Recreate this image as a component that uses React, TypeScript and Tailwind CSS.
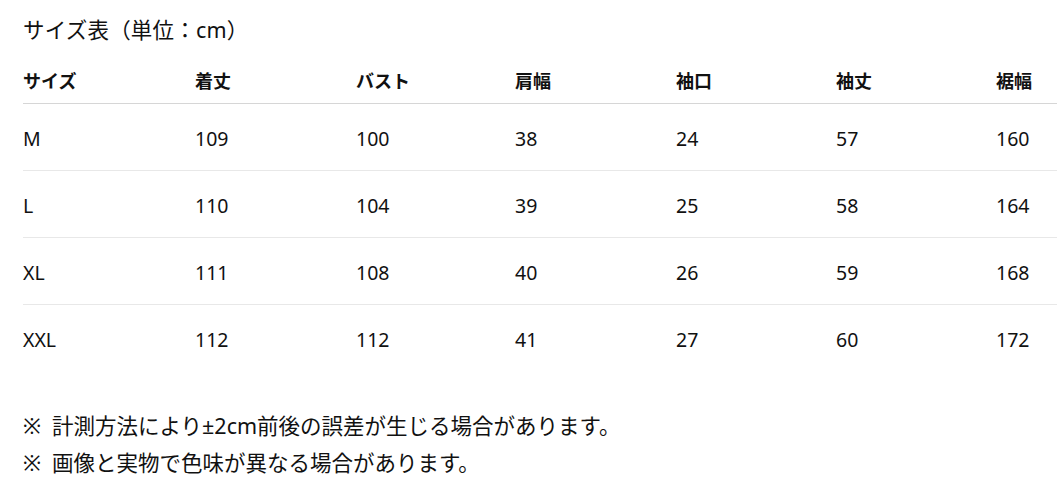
const font = { fontFamily: '"Noto Sans", "Noto Sans CJK JP", sans-serif' };

const headers = ['サイズ', '着丈', 'バスト', '肩幅', '袖口', '袖丈', '裾幅'];
const rows = [
  ['M', '109', '100', '38', '24', '57', '160'],
  ['L', '110', '104', '39', '25', '58', '164'],
  ['XL', '111', '108', '40', '26', '59', '168'],
  ['XXL', '112', '112', '41', '27', '60', '172'],
];
const widths = ['w-[172px]', 'w-[161px]', 'w-[159px]', 'w-[161px]', 'w-[160px]', 'w-[160px]', 'w-[61px]'];
const notes = ['計測方法により±2cm前後の誤差が生じる場合があります。', '画像と実物で色味が異なる場合があります。'];

export default function App() {
  return (
    <div className="min-h-screen bg-white text-[#111] pl-[23px] pt-[14px]" style={font}>
      <div className="text-[21.5px] leading-[32px] tracking-[0.2px]">サイズ表（単位：cm）</div>
      <table className="mt-[18px] border-collapse">
        <thead>
          <tr className="border-b border-[#d6d6d6]">
            {headers.map((h, i) => (
              <th key={h} className={`${widths[i]} text-left font-bold text-[18px] h-[39px] pb-[4px] p-0 whitespace-nowrap`}>
                {h}
              </th>
            ))}
          </tr>
        </thead>
        <tbody>
          {rows.map((r, ri) => (
            <tr key={r[0]} className={ri < rows.length - 1 ? 'border-b border-[#e8e8e8]' : ''}>
              {r.map((c, i) => (
                <td key={i} className="p-0 pt-[4px] h-[67px] text-[19.5px] whitespace-nowrap">{c}</td>
              ))}
            </tr>
          ))}
        </tbody>
      </table>
      <div className="mt-[36px] text-[21.5px] leading-[37px]">
        {notes.map(n => (
          <div key={n}>
            <span className="mr-[11px]">※</span>{n}
          </div>
        ))}
      </div>
    </div>
  );
}
